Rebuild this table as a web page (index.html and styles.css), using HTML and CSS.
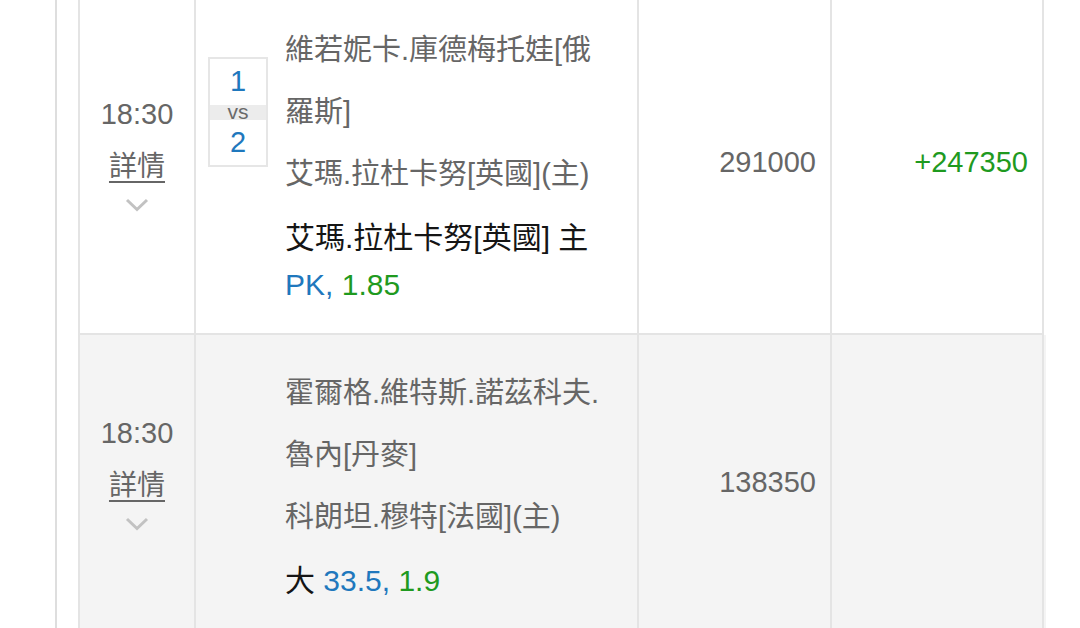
FILE: index.html
```html
<!DOCTYPE html>
<html lang="zh-Hant">
<head>
<meta charset="utf-8">
<title>注單</title>
<link rel="stylesheet" href="styles.css">
</head>
<body>
<div class="frame">
  <div class="list">
    <div class="row">
      <div class="cell time-cell">
        <div class="time">18:30</div>
        <a class="detail" href="#">詳情</a>
        <svg class="chev" width="24" height="14" viewBox="0 0 24 14"><path d="M2 2 L12 11.5 L22 2" fill="none" stroke="#c2c2c2" stroke-width="3"/></svg>
      </div>
      <div class="cell match">
        <div class="pair">
          <div class="vs">
            <div class="vs-num">1</div>
            <div class="vs-mid">vs</div>
            <div class="vs-num">2</div>
          </div>
          <div class="names">
            <div class="name">維若妮卡.庫德梅托娃[俄羅斯]</div>
            <div class="name">艾瑪.拉杜卡努[英國](主)</div>
          </div>
        </div>
        <div class="bet">艾瑪.拉杜卡努[英國] 主 <span class="hcp">PK,</span> <span class="odds">1.85</span></div>
      </div>
      <div class="cell num">291000</div>
      <div class="cell num win">+247350</div>
    </div>
    <div class="row alt">
      <div class="cell time-cell">
        <div class="time">18:30</div>
        <a class="detail" href="#">詳情</a>
        <svg class="chev" width="24" height="14" viewBox="0 0 24 14"><path d="M2 2 L12 11.5 L22 2" fill="none" stroke="#c2c2c2" stroke-width="3"/></svg>
      </div>
      <div class="cell match">
        <div class="pair">
          <div class="vs empty"></div>
          <div class="names">
            <div class="name">霍爾格.維特斯.諾茲科夫.魯內[丹麥]</div>
            <div class="name">科朗坦.穆特[法國](主)</div>
          </div>
        </div>
        <div class="bet">大 <span class="hcp">33.5,</span> <span class="odds">1.9</span></div>
      </div>
      <div class="cell num">138350</div>
      <div class="cell num win"></div>
    </div>
  </div>
</div>
</body>
</html>
```

FILE: styles.css
```css
html, body {
  margin: 0;
  padding: 0;
  background: #ffffff;
}
body {
  width: 1080px;
  height: 628px;
  overflow: hidden;
  font-family: "Liberation Sans", "Noto Sans CJK TC", sans-serif;
  font-size: 29px;
  color: #666666;
}
.frame {
  margin-left: 55px;
  width: 1009px;
  height: 700px;
  border-left: 2px solid #dedede;
  border-right: 2px solid #dedede;
  padding-left: 21px;
}
.list {
  margin-top: -8px;
  width: 966px;
  border-left: 2px solid #e4e4e4;
}
.row {
  display: grid;
  grid-template-columns: 116px 443px 193px 212px;
  background: #ffffff;
}
.row.alt {
  background: #f4f4f4;
}
.cell {
  box-sizing: border-box;
  border-right: 2px solid #e4e4e4;
  border-bottom: 2px solid #e4e4e4;
  padding: 27px 24px 25px 12px;
}
.time-cell {
  display: flex;
  flex-direction: column;
  align-items: center;
  justify-content: center;
  padding: 0;
}
.time {
  line-height: 50px;
  color: #666;
}
.detail {
  line-height: 50px;
  color: #666;
  text-decoration: underline;
  text-underline-offset: 5px;
  text-decoration-thickness: 2px;
  font-family: "Noto Sans CJK TC", sans-serif;
  font-size: 28px;
}
.chev {
  display: block;
  margin-top: 9px;
  margin-bottom: 25px;
}
.pair {
  display: flex;
  align-items: center;
}
.vs {
  box-sizing: border-box;
  width: 60px;
  height: 110px;
  border: 2px solid #e6e6e6;
  flex: none;
  display: flex;
  flex-direction: column;
  margin-right: 17px;
  background: #ffffff;
}
.vs.empty {
  border: none;
  background: transparent;
}
.vs-num {
  flex: 1;
  display: flex;
  align-items: center;
  justify-content: center;
  color: #1f78bd;
  font-size: 29px;
  line-height: 1;
}
.vs-mid {
  height: 15px;
  background: #ececec;
  color: #6a6a6a;
  font-size: 21px;
  line-height: 14px;
  text-align: center;
}
.names {
  flex: 1;
  min-width: 0;
}
.name {
  line-height: 62px;
  color: #666;
}
.bet {
  margin-top: 9px;
  margin-left: 77px;
  line-height: 47px;
  font-size: 30px;
  color: #151515;
}
.hcp {
  color: #1f78bd;
}
.odds {
  color: #1f9a1f;
}
.num {
  display: flex;
  align-items: center;
  justify-content: flex-end;
  padding: 0 14px 0 0;
  color: #666;
}
.num.win {
  color: #1f9a1f;
}
```
